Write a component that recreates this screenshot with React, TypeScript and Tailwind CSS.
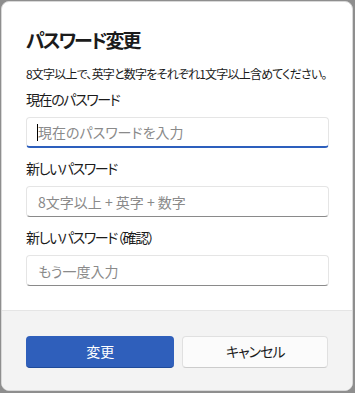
import React from "react";

const font = { fontFamily: '"Noto Sans CJK JP", "Noto Sans", sans-serif' };

function Field({ label, placeholder, focused }: { label: string; placeholder: string; focused?: boolean }) {
  return (
    <div className="flex flex-col">
      <div className="text-[14px] leading-[20px] text-[#1b1b1b] mb-[8px] tracking-[-1.4px]">{label}</div>
      <div
        className={
          "relative h-[31px] w-[303px] rounded-[4px] bg-white border border-[#e5e5e5] flex items-center px-[11px] " +
          (focused ? "border-b-[2px] border-b-[#2d5fbd]" : "border-b-[#8a8a8a]")
        }
      >
        {focused && <div className="absolute left-[10px] top-[6px] w-[1px] h-[17px] bg-black" />}
        <span className="text-[14px] text-[#8a8a8a] leading-[20px]">{placeholder}</span>
      </div>
    </div>
  );
}

export default function App() {
  return (
    <div
      className="w-[355px] h-[393px] bg-[#8e8e8e] pl-[1px] pt-[1px] pr-[2px] pb-[2px] [font-feature-settings:'palt']"
      style={font}
    >
      <div className="w-full h-full rounded-[8px] overflow-hidden bg-white flex flex-col border border-[#d8d8d8]">
        <div className="flex flex-col px-[24px] pt-[24px] flex-1">
          <div className="text-[19px] leading-[28px] font-semibold text-[#1b1b1b] tracking-[-2px]">パスワード変更</div>
          <div className="text-[12px] leading-[16px] text-[#1b1b1b] mt-[12px] whitespace-nowrap tracking-[-0.8px]">
            8文字以上で、英字と数字をそれぞれ1文字以上含めてください。
          </div>
          <div className="mt-[7px] flex flex-col gap-[10px]">
            <Field label="現在のパスワード" placeholder="現在のパスワードを入力" focused />
            <Field label="新しいパスワード" placeholder="8文字以上 + 英字 + 数字" />
            <Field label="新しいパスワード（確認）" placeholder="もう一度入力" />
          </div>
        </div>
        <div className="h-[80px] bg-[#f3f3f3] border-t border-[#e5e5e5] px-[24px] flex items-center gap-[8px] pt-[2px]">
          <button className="w-[149px] h-[32px] rounded-[4px] bg-[#2f5fbb] border-b border-[#1e4a9a] text-white text-[14px]">
            変更
          </button>
          <button className="w-[146px] h-[32px] rounded-[4px] bg-[#fbfbfb] border border-[#e0e0e0] border-b-[#cccccc] text-[#1b1b1b] text-[14px] tracking-[-1px]">
            キャンセル
          </button>
        </div>
      </div>
    </div>
  );
}
